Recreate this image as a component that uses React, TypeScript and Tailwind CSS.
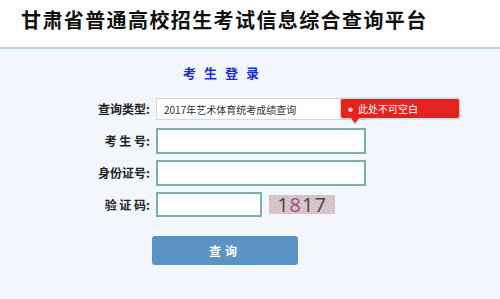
const font = { fontFamily: '"Noto Sans CJK SC", "Noto Sans", sans-serif' };

function Tooltip() {
  return (
    <div className="absolute left-[184px] top-[0px] w-[120px] h-[21px] rounded-[3px] bg-[#e5221f] border border-[#d4d4d4] shadow-[0_0_2px_rgba(0,0,0,0.25)] flex items-center pl-[7px]">
      <span className="text-[5px] text-[#f6c9c8] mr-[5px]">●</span>
      <span className="text-[10px] leading-none text-white" style={{ fontFamily: '"Noto Sans CJK SC", serif' }}>
        此处不可空白
      </span>
      <span className="absolute left-[8px] bottom-[-7px] w-0 h-0 border-x-[6px] border-x-transparent border-t-[7px] border-t-[#cfcfcf]" />
      <span className="absolute left-[9px] bottom-[-5px] w-0 h-0 border-x-[5px] border-x-transparent border-t-[6px] border-t-[#e5221f]" />
    </div>
  );
}

function Captcha() {
  return (
    <div className="ml-[7px] w-[66px] h-[19px] flex items-center justify-center bg-[#d9c9cd] bg-[repeating-linear-gradient(35deg,rgba(150,120,130,0.18)_0px,rgba(150,120,130,0.18)_1px,transparent_1px,transparent_3px)]">
      <span className="text-[20px] leading-none tracking-[1px] text-[#4a4647]" style={{ fontFamily: '"Open Sans", "Liberation Sans", sans-serif' }}>
        1<span className="text-[#a84a7c]">8</span>17
      </span>
    </div>
  );
}

function Row({ label, children, className = '' }: { label: string; children: React.ReactNode; className?: string }) {
  return (
    <div className={`flex items-center ${className}`}>
      <div className="w-[56px] text-right text-[12px] font-bold text-[#222] leading-none whitespace-pre">{label}</div>
      <div className="ml-[6px] flex items-center relative">{children}</div>
    </div>
  );
}

export default function App() {
  return (
    <div className="w-[500px] h-[299px] bg-[#f3f7fd] overflow-hidden" style={font}>
      <div className="h-[49px] bg-white border-b-2 border-[#b8d9d7] pl-[21px] pt-[6px]">
        <h1 className="text-[20px] leading-[28px] font-bold tracking-[1.4px] text-[#111]">甘肃省普通高校招生考试信息综合查询平台</h1>
      </div>

      <div className="pt-[16px] pl-[183px]">
        <h2 className="text-[13px] leading-[16px] font-bold tracking-[8px] text-[#1b2fd0]">考生登录</h2>
      </div>

      <div className="pl-[94px] pt-[17px]">
        <Row label="查询类型:">
          <div className="w-[210px] h-[22px] bg-white border border-[#d8d8d8] flex items-center pl-[7px] text-[10px] text-[#333]">
            2017年艺术体育统考成绩查询
          </div>
          <Tooltip />
        </Row>
        <Row label="考 生 号:" className="mt-[8px]">
          <input className="w-[210px] h-[26px] bg-white border-2 border-[#79b0ae] outline-none" />
        </Row>
        <Row label="身份证号:" className="mt-[6px]">
          <input className="w-[210px] h-[26px] bg-white border-2 border-[#79b0ae] outline-none" />
        </Row>
        <Row label="验 证 码:" className="mt-[6px]">
          <input className="w-[106px] h-[25px] bg-white border-2 border-[#79b0ae] outline-none" />
          <Captcha />
        </Row>
        <button className="ml-[58px] mt-[19px] w-[146px] h-[29px] rounded-[3px] bg-[#5b93c5] text-white text-[12px] font-bold tracking-[4px]">
          查询
        </button>
      </div>
    </div>
  );
}
